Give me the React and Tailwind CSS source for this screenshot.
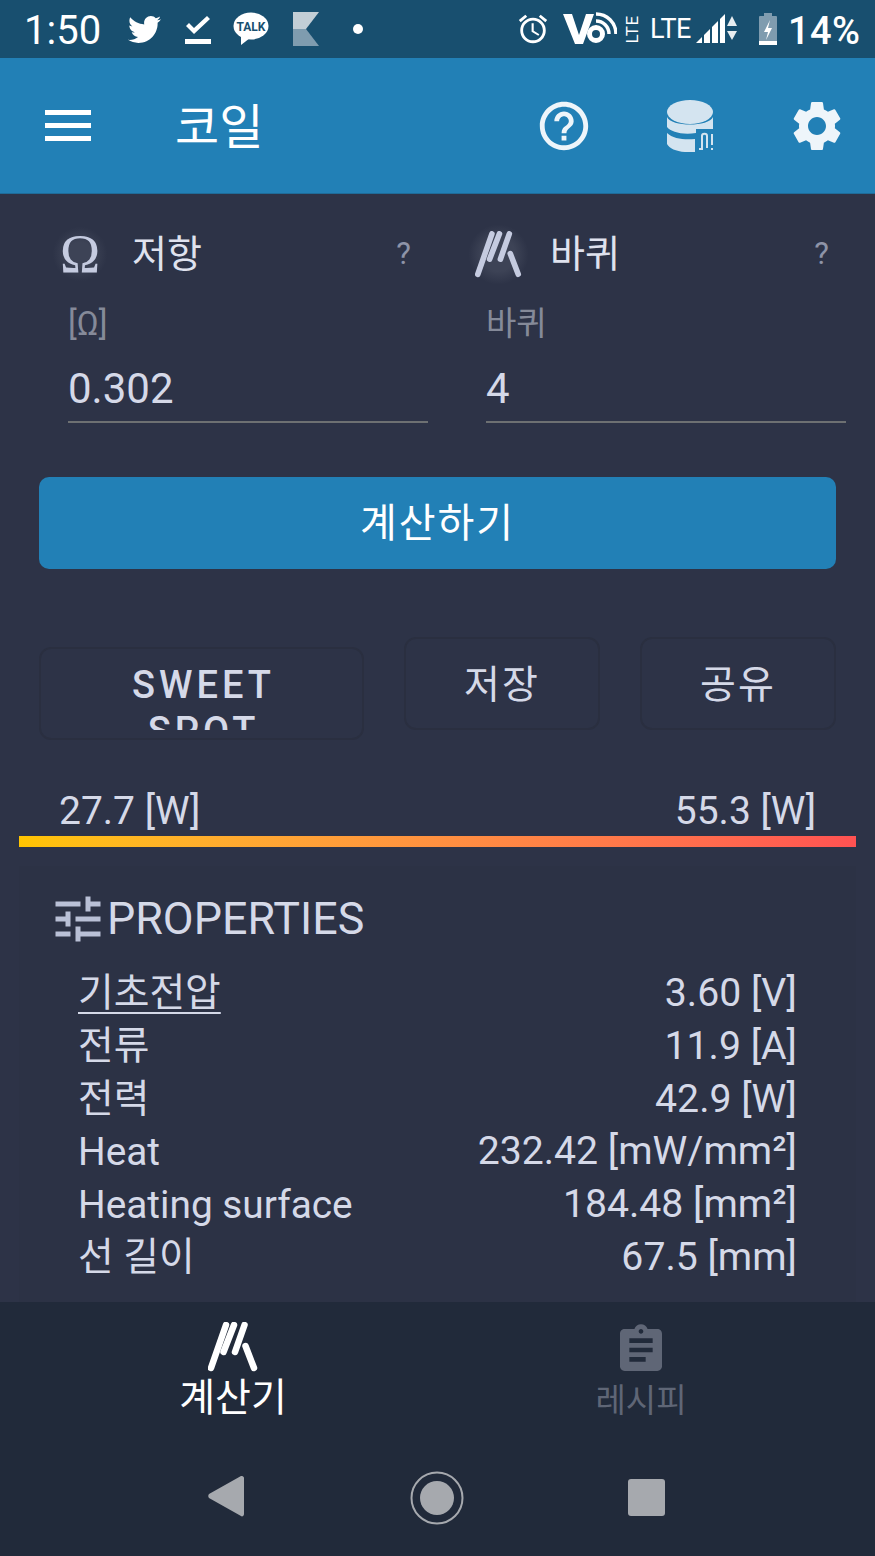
import { FaTwitter } from 'react-icons/fa';
import { MdHelpOutline, MdSettings, MdAssignment, MdTune, MdAccessAlarm } from 'react-icons/md';

const FONT = "font-['Roboto','Noto_Sans_CJK_KR',sans-serif]";

const CoilIcon = ({ className, width = 6 }) => (
  <svg viewBox="0 0 50 50" className={className} fill="none" stroke="currentColor" strokeWidth={width} strokeLinecap="round">
    <path d="M3 46 L18 3" />
    <path d="M15.5 30 L26 3" />
    <path d="M27 30 L36.5 3" />
    <path d="M37.5 24 L46 46" />
  </svg>
);

const DbIcon = () => (
  <svg viewBox="0 0 48 52" className="w-[48px] h-[52px]" fill="#d4e4f0">
    <ellipse cx="23" cy="12" rx="23" ry="12" />
    <path d="M0 17 C4 27 42 27 46 17 V29 H29 V33 C15 35 4 32 0 27 Z" />
    <path d="M0 33 C6 39 18 40 28 39 V52 C14 53 3 50 0 44 Z" />
    <path d="M32 49 H35 V36 C35 33 40 33 40 36 V48 H40" fill="none" stroke="#d4e4f0" strokeWidth="2" />
    <path d="M45 34 V45 M45 48 V50" fill="none" stroke="#d4e4f0" strokeWidth="2" />
  </svg>
);

const Field = ({ icon, title, label, value }) => (
  <div className="w-[360px] flex flex-col">
    <div className="h-[60px] flex items-center -ml-[24px]">
      <div className="w-[72px] mr-[16px] shrink-0 flex items-center justify-center">{icon}</div>
      <span className="text-[38px] text-[#dfe2ee] pt-[1px]">{title}</span>
      <span className="ml-auto mr-[17px] text-[31px] text-[#8e94a8]">?</span>
    </div>
    <div className="mt-[20px] h-[40px] flex items-center text-[33px] text-[#858a99]">{label}</div>
    <div className="mt-[12px] h-[67px] flex items-center text-[42px] text-[#d5d9e8] border-b-2 border-[#6d7072]">{value}</div>
  </div>
);

const Row = ({ label, value, underline }) => (
  <div className="h-[52.8px] flex items-center justify-between text-[38.8px] text-[#d5d9e8]">
    <span className={underline ? 'underline decoration-2 underline-offset-[6px]' : ''}>{label}</span>
    <span className="text-[39.2px]">{value}</span>
  </div>
);

const GhostButton = ({ className, children }) => (
  <div className={`h-[93px] rounded-[12px] border-2 border-[#2a2f40] overflow-hidden text-center text-[#d5d9e8] ${className}`}>
    {children}
  </div>
);

const StatusBar = () => (
  <div className="h-[58px] shrink-0 bg-[#184f6f] flex items-center text-white">
    <span className="ml-[24px] pt-[3px] w-[76px] text-[40px] leading-none">1:50</span>
    <FaTwitter className="ml-[28px] w-[33px] h-[33px]" />
    <svg viewBox="0 0 26 32" className="ml-[24px] w-[26px] h-[32px]" fill="white">
      <path d="M1 13 L4 10 L9 15 L22 3 L25 6 L9 21 Z" />
      <rect x="0" y="26" width="26" height="5" />
    </svg>
    <svg viewBox="0 0 36 34" className="ml-[22px] w-[36px] h-[34px]">
      <ellipse cx="18" cy="14" rx="17.5" ry="13.5" fill="white" />
      <path d="M8 24 L8 33 L17 26 Z" fill="white" />
      <text x="18" y="18.5" textAnchor="middle" fontSize="12" fontWeight="700" fill="#184f6f" fontFamily="Roboto">TALK</text>
    </svg>
    <svg viewBox="0 0 26 34" className="ml-[24px] w-[26px] h-[34px]">
      <polygon points="0,0 26,0 13,17 0,17" fill="#c2ced6" />
      <polygon points="0,17 13,17 26,34 0,34" fill="#7f9caf" />
    </svg>
    <span className="ml-[34px] w-[10px] h-[10px] rounded-full bg-white" />
    <MdAccessAlarm className="ml-[153px] w-[34px] h-[34px]" />
    <svg viewBox="0 0 54 34" className="ml-[13px] w-[54px] h-[34px]" fill="white">
      <path d="M0 2 H9 L16 23 L23 2 H31 L20 32 H12 Z" />
      <circle cx="33" cy="22" r="6.5" fill="none" stroke="white" strokeWidth="5" />
      <path d="M33 9 A13 13 0 0 1 46 22 M33 2 A20 20 0 0 1 53 22" fill="none" stroke="white" strokeWidth="3.5" />
    </svg>
    <div className="ml-[8px] w-[14px] h-[34px] flex items-center justify-center">
      <span className="-rotate-90 text-[17px] leading-none tracking-[0.5px] whitespace-nowrap">LTE</span>
    </div>
    <span className="ml-[11px] text-[27px] leading-none tracking-[-0.5px]">LTE</span>
    <svg viewBox="0 0 42 30" className="ml-[5px] w-[42px] h-[30px]" fill="white">
      <polygon points="0,29 6,23 6,29" />
      <polygon points="8,21 14,15 14,29 8,29" />
      <polygon points="16,13 22,7 22,29 16,29" />
      <polygon points="24,5 29,0 29,29 24,29" />
      <polygon points="36,2 41,12 31,12" opacity="0.9" />
      <polygon points="31,17 41,17 36,26" opacity="0.9" />
    </svg>
    <svg viewBox="0 0 18 32" className="ml-[21px] w-[18px] h-[32px]">
      <rect x="0" y="3" width="18" height="29" rx="1" fill="#7f9caf" />
      <rect x="5" y="0" width="8" height="4" fill="#7f9caf" />
      <rect x="0" y="28" width="18" height="4" fill="white" />
      <path d="M11 7 L5 19 H9 L7 27 L13 15 H9 Z" fill="white" />
    </svg>
    <span className="ml-[11px] pt-[3px] text-[38px] leading-none font-medium tracking-[0.5px]">14%</span>
  </div>
);

const AppBar = () => (
  <div className="h-[136px] shrink-0 bg-[#2280b6] flex items-center border-b border-[#1f6b98]">
    <div className="ml-[45px] w-[46px] flex flex-col gap-[8px]">
      <span className="h-[5px] bg-white" />
      <span className="h-[5px] bg-white" />
      <span className="h-[5px] bg-white" />
    </div>
    <span className="ml-[84px] w-[90px] pt-[5px] whitespace-nowrap text-[48px] leading-none text-white">코일</span>
    <MdHelpOutline className="ml-[270px] w-[58px] h-[58px] text-[#eef5fa]" />
    <div className="ml-[74px]"><DbIcon /></div>
    <MdSettings className="ml-[72px] w-[60px] h-[60px] text-[#eef5fa]" />
  </div>
);

const BottomBar = () => (
  <div className="shrink-0 bg-[#212a3a]">
    <div className="h-[140px] flex">
      <div className="w-[466px] flex flex-col items-center pt-[20px] text-white">
        <CoilIcon className="w-[50px] h-[50px]" width={6.5} />
        <span className="mt-[3px] text-[39px] leading-[46px]">계산기</span>
      </div>
      <div className="w-[350px] flex flex-col items-center pt-[20px] text-[#5f6676]">
        <MdAssignment className="w-[56px] h-[56px]" />
        <span className="text-[33px] leading-[46px]">레시피</span>
      </div>
    </div>
    <div className="h-[114px] flex items-start pt-[29px] text-[#a6a9ae]">
      <svg viewBox="0 0 36 42" className="ml-[208px] mt-[4px] w-[36px] h-[42px]" fill="currentColor">
        <path d="M34 1 C35 1 36 2 36 3 V39 C36 41 34 42 33 41 L1 23 C0 22 0 20 1 19 L33 1 Z" />
      </svg>
      <svg viewBox="0 0 54 54" className="ml-[166px] w-[54px] h-[54px]">
        <circle cx="27" cy="27" r="25.5" fill="none" stroke="currentColor" strokeWidth="2" />
        <circle cx="27" cy="27" r="17" fill="currentColor" />
      </svg>
      <div className="ml-[164px] mt-[8px] w-[37px] h-[37px] rounded-[3px] bg-[#a6a9ae]" />
    </div>
  </div>
);

export default function App() {
  return (
    <div className={`${FONT} w-[875px] h-[1556px] overflow-hidden flex flex-col bg-[#2d3347]`}>
      <StatusBar />
      <AppBar />
      <div className="flex-1 min-h-0 overflow-hidden flex flex-col">
        <div className="pt-[30px] pl-[68px] flex gap-[58px]">
          <Field
            icon={<span className="font-['Liberation_Serif',serif] text-[54px] leading-none text-[#c5cbe0] bg-[radial-gradient(circle,#3d4356_30%,transparent_70%)] px-[8px]">Ω</span>}
            title="저항"
            label="[Ω]"
            value="0.302"
          />
          <Field
            icon={<div className="bg-[radial-gradient(circle,#3d4356_40%,transparent_72%)] p-[6px] text-[#c5cbe0]"><CoilIcon className="w-[47px] h-[47px]" /></div>}
            title="바퀴"
            label="바퀴"
            value="4"
          />
        </div>
        <div className="mt-[54px] mx-[39px] h-[92px] rounded-[10px] bg-[#2280b6] flex items-center justify-center pt-[1px] text-[40px] tracking-[2px] text-white">계산하기</div>
        <div className="mt-[68px] px-[39px] flex items-start">
          <GhostButton className="mt-[10px] w-[325px] pt-[11px] pl-[4px]">
            <div className="h-[70px] overflow-hidden pt-[2px] text-[38px] leading-[46px] font-medium tracking-[4px]">SWEET<br />SPOT</div>
          </GhostButton>
          <GhostButton className="ml-[40px] w-[196px] text-[39px] leading-[46px] tracking-[2px] pt-[23px]">저장</GhostButton>
          <GhostButton className="ml-[40px] w-[196px] text-[39px] leading-[46px] tracking-[2px] pt-[23px]">공유</GhostButton>
        </div>
        <div className="mt-[46px] px-[59px] h-[50px] flex items-center justify-between text-[39px] text-[#d5d9e8]">
          <span>27.7 [W]</span>
          <span>55.3 [W]</span>
        </div>
        <div className="mx-[19px] h-[11px] bg-gradient-to-r from-[#ffc400] to-[#ff5252]" />
        <div className="mt-[19px] mx-[19px] flex-1 bg-[#2c3245] px-[36px] pt-[25px]">
          <div className="flex items-center h-[56px]">
            <MdTune className="w-[60px] h-[60px] -ml-[7px] shrink-0 text-[#b9c0d6]" />
            <span className="-ml-[1px] text-[44.8px] leading-none text-[#d5d9e8]">PROPERTIES</span>
          </div>
          <div className="mt-[20px] pl-[23px] pr-[23px]">
            <Row label="기초전압" value="3.60 [V]" underline />
            <Row label="전류" value="11.9 [A]" />
            <Row label="전력" value="42.9 [W]" />
            <Row label="Heat" value="232.42 [mW/mm²]" />
            <Row label="Heating surface" value="184.48 [mm²]" />
            <Row label="선 길이" value="67.5 [mm]" />
          </div>
        </div>
      </div>
      <BottomBar />
    </div>
  );
}
